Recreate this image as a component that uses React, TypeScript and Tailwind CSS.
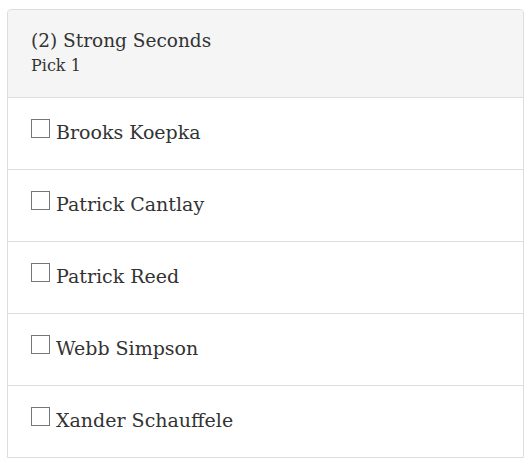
const players = ['Brooks Koepka', 'Patrick Cantlay', 'Patrick Reed', 'Webb Simpson', 'Xander Schauffele'];

export default function App() {
  return (
    <div className="min-h-screen bg-white pt-[9px] pl-[7px] font-['DejaVu_Serif',serif] text-[#333]">
      <div className="w-[517px] rounded-t-[4px] border border-[#dddddd]">
        <div className="rounded-t-[4px] bg-[#f5f5f5] pl-[23px] pt-[18px] pb-[20px]">
          <div className="text-[18.5px] leading-[26px]">(2) Strong Seconds</div>
          <div className="mt-[1px] text-[16px] leading-[22px]">Pick 1</div>
        </div>
        {players.map(name => (
          <label key={name} className="flex items-start border-t border-[#dddddd] pl-[23px] pt-[21px] pb-[24px]">
            <span className="h-[19px] w-[19px] shrink-0 border border-[#767676] bg-white" />
            <span className="ml-[6px] text-[19px] leading-[26px]">{name}</span>
          </label>
        ))}
      </div>
    </div>
  );
}
